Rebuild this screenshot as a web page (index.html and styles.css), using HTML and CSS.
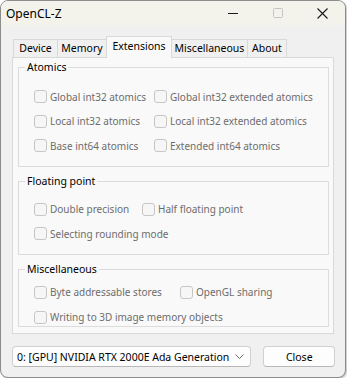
FILE: index.html
```html
<!DOCTYPE html>
<html lang="en">
<head>
  <meta charset="UTF-8" />
  <title>OpenCL-Z</title>
  <link rel="stylesheet" href="styles.css">
</head>
<body>
  <div class="window">
    <div class="titlebar">
      <span class="title">OpenCL-Z</span>
      <div class="controls">
        <span class="ctl">
          <svg width="10" height="10" viewBox="0 0 10 10"><path d="M0 5.5h10" stroke="#1a1a1a" stroke-width="1"/></svg>
        </span>
        <span class="ctl">
          <svg width="10" height="10" viewBox="0 0 10 10"><rect x="0.5" y="0.5" width="9" height="9" rx="1" fill="none" stroke="#c4c4c4"/></svg>
        </span>
        <span class="ctl">
          <svg width="11" height="11" viewBox="0 0 11 11"><path d="M0.5 0.5l10 10M10.5 0.5l-10 10" stroke="#1a1a1a" stroke-width="1.1"/></svg>
        </span>
      </div>
    </div>

    <div class="client">
      <div class="tabs">
        <span class="tab t-device">Device</span>
        <span class="tab t-memory">Memory</span>
        <span class="tab t-ext active">Extensions</span>
        <span class="tab t-misc">Miscellaneous</span>
        <span class="tab t-about">About</span>
      </div>

      <div class="panel">
        <fieldset class="group atomics">
          <legend>Atomics</legend>
          <div class="row">
            <label class="check"><span class="box"></span>Global int32 atomics</label>
            <label class="check"><span class="box"></span>Global int32 extended atomics</label>
          </div>
          <div class="row">
            <label class="check"><span class="box"></span>Local int32 atomics</label>
            <label class="check"><span class="box"></span>Local int32 extended atomics</label>
          </div>
          <div class="row">
            <label class="check"><span class="box"></span>Base int64 atomics</label>
            <label class="check"><span class="box"></span>Extended int64 atomics</label>
          </div>
        </fieldset>

        <fieldset class="group floating">
          <legend>Floating point</legend>
          <div class="row">
            <label class="check"><span class="box"></span>Double precision</label>
            <label class="check"><span class="box"></span>Half floating point</label>
          </div>
          <div class="row">
            <label class="check"><span class="box"></span>Selecting rounding mode</label>
          </div>
        </fieldset>

        <fieldset class="group misc">
          <legend>Miscellaneous</legend>
          <div class="row">
            <label class="check"><span class="box"></span>Byte addressable stores</label>
            <label class="check"><span class="box"></span>OpenGL sharing</label>
          </div>
          <div class="row">
            <label class="check"><span class="box"></span>Writing to 3D image memory objects</label>
          </div>
        </fieldset>
      </div>

      <div class="footer">
        <div class="combo">
          <span>0: [GPU] NVIDIA RTX 2000E Ada Generation</span>
          <svg width="9" height="5" viewBox="0 0 9 5"><path d="M0.5 0.5l4 4 4-4" fill="none" stroke="#6a6a6a"/></svg>
        </div>
        <button class="btn">Close</button>
      </div>
    </div>
  </div>
</body>
</html>
```

FILE: styles.css
```css
* { box-sizing: border-box; }

body {
  margin: 0;
  background: #ffffff;
  font-family: "Noto Sans", "Open Sans", sans-serif;
  font-size: 10px;
  color: #000;
}

.window {
  width: 346px;
  height: 378px;
  border: 1px solid #8c8c8c;
  border-radius: 8px;
  overflow: hidden;
  background: #f0f0f0;
  box-shadow: 1px 1px 2px rgba(0,0,0,0.25);
  display: flex;
  flex-direction: column;
}

.titlebar {
  height: 24px;
  background: #f3f3eb;
  display: flex;
  align-items: center;
  padding-left: 5px;
}

.title {
  font-size: 12px;
  flex: 1;
}

.controls {
  display: flex;
  height: 100%;
}

.ctl {
  width: 45px;
  display: flex;
  align-items: center;
  justify-content: center;
}

.client {
  flex: 1;
  padding: 11px 10px 0 11px;
  display: flex;
  flex-direction: column;
}

.tabs {
  display: flex;
  align-items: flex-start;
  height: 21px;
  padding-left: 1px;
  position: relative;
  z-index: 1;
}

.tab {
  height: 18px;
  margin-top: 3px;
  line-height: 17px;
  border: 1px solid #d9d9d9;
  border-bottom: none;
  border-right: none;
  background: #f0f0f0;
  text-align: center;
  color: #000;
  font-size: 10.5px;
}

.t-device { width: 44px; }
.t-memory { width: 49px; }
.t-ext { width: 66px; }
.t-misc { width: 75px; }
.t-about { width: 40px; border-right: 1px solid #d9d9d9; }

.tab.active {
  margin-top: 0;
  height: 22px;
  line-height: 18px;
  background: #f9f9f9;
  border-right: 1px solid #d9d9d9;
}

.tab.active + .tab { border-left: none; }

.panel {
  width: 322px;
  height: 277px;
  background: #f9f9f9;
  border: 1px solid #d9d9d9;
  padding: 2px 4px 0 5px;
  display: flex;
  flex-direction: column;
  gap: 7px;
}

.group {
  margin: 0;
  border: 1px solid #dcdcdc;
  padding: 0 0 0 15px;
  min-width: 0;
}

.group legend {
  padding: 0 2px;
  margin-left: -9px;
  line-height: 14px;
  font-size: 10.5px;
}

.atomics { height: 107px; padding-top: 10.5px; }
.floating { height: 81px; padding-top: 9px; }
.misc { height: 65px; padding-top: 3.5px; }

.row {
  display: flex;
  height: 24.5px;
  align-items: center;
}

.misc .row { height: 25px; }

.check {
  display: flex;
  align-items: center;
  color: #6d6d6d;
  white-space: nowrap;
  flex: none;
}

.atomics .check:first-child { width: 120px; }
.floating .check:first-child { width: 108px; }
.misc .check:first-child { width: 146px; }

.box {
  flex: none;
  width: 13px;
  height: 13px;
  border: 1px solid #c6c6c6;
  border-radius: 3px;
  background: #f6f6f6;
  margin-right: 3px;
}

.footer {
  display: flex;
  align-items: center;
  margin-top: 12px;
  gap: 12px;
}

.combo {
  width: 241px;
  height: 21px;
  background: #fdfdfd;
  border: 1px solid #d0d0d0;
  border-bottom-color: #b8b8b8;
  border-radius: 4px;
  display: flex;
  align-items: center;
  justify-content: space-between;
  padding: 0 6px 0 4px;
  font-size: 10.5px;
  white-space: nowrap;
}

.btn {
  width: 72px;
  height: 21px;
  background: #fdfdfd;
  border: 1px solid #d0d0d0;
  border-bottom-color: #b8b8b8;
  border-radius: 4px;
  font-family: inherit;
  font-size: 10.5px;
  color: #000;
  padding: 0;
}
```
